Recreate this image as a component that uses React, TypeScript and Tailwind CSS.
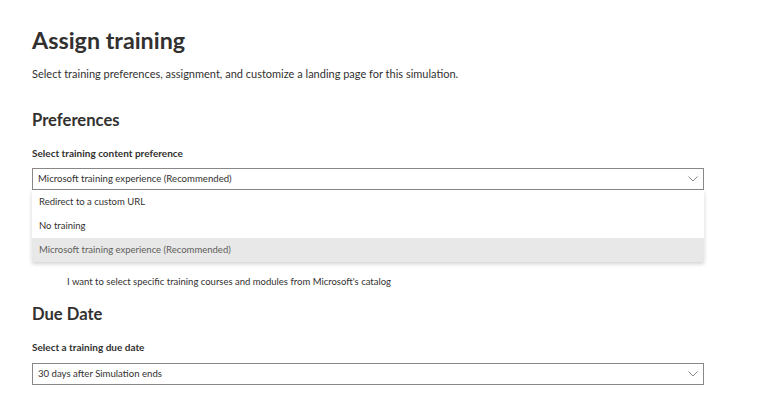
import React from 'react';

const Chevron = () => (
  <svg width="10" height="6" viewBox="0 0 10 6" fill="none" className="text-[#8a8a8a]">
    <path d="M0.5 0.5 L5 5 L9.5 0.5" stroke="currentColor" strokeWidth="1" />
  </svg>
);

const options = ['Redirect to a custom URL', 'No training', 'Microsoft training experience (Recommended)'];

const App: React.FC = () => {
  return (
    <div className="min-h-screen bg-white text-[#323130] font-['Lato',sans-serif] pl-8 pr-16 pt-[25px]">
      <h1 className="text-[23.3px] font-bold leading-[30px]">Assign training</h1>
      <p className="mt-[11px] text-[11px] leading-4">
        Select training preferences, assignment, and customize a landing page for this simulation.
      </p>

      <h2 className="mt-[26px] text-[16.6px] font-bold leading-6">Preferences</h2>
      <div className="mt-[14px] text-[10px] font-bold leading-[14px]">Select training content preference</div>

      <div className="relative mt-[8px]">
        <div className="h-[22px] border border-[#8a8886] flex items-center justify-between pl-[5px] pr-[5px] text-[9.6px]">
          <span>Microsoft training experience (Recommended)</span>
          <Chevron />
        </div>
        <ul className="absolute left-0 right-0 top-[22px] bg-white shadow-[0_2px_4px_rgba(0,0,0,0.18)] text-[9.5px] z-10">
          {options.map((opt, i) => (
            <li
              key={i}
              className={`h-[24px] flex items-center pl-[7px] ${
                i === 2 ? 'bg-[#e8e8e8] text-[#605e5c]' : ''
              }`}
            >
              {opt}
            </li>
          ))}
        </ul>
      </div>

      <div className="mt-[84px] pl-[35px] text-[9.5px] leading-4">
        I want to select specific training courses and modules from Microsoft's catalog
      </div>

      <h2 className="mt-[12px] text-[16.6px] font-bold leading-6">Due Date</h2>
      <div className="mt-[14px] text-[10px] font-bold leading-[14px]">Select a training due date</div>
      <div className="mt-[9px] h-[22px] border border-[#8a8886] flex items-center justify-between pl-[5px] pr-[5px] text-[9.6px]">
        <span>30 days after Simulation ends</span>
        <Chevron />
      </div>
    </div>
  );
};

export default App;
